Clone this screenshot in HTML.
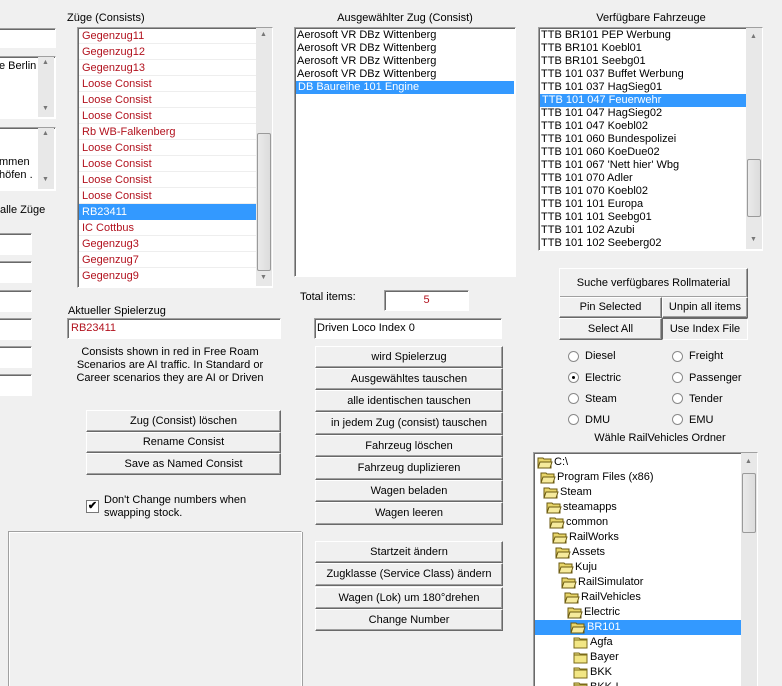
<!DOCTYPE html>
<html><head><meta charset="utf-8"><style>
*{box-sizing:border-box;margin:0;padding:0}
html,body{width:782px;height:686px;overflow:hidden}
body{background:#f0f0f0;font-family:"Liberation Sans",sans-serif;font-size:11px;color:#000;position:relative}
.a{position:absolute}
.in{position:absolute;background:#fff;border:1px solid;border-color:#a0a0a0 #fff #fff #a0a0a0;box-shadow:inset 1px 1px 0 #696969;overflow:hidden}
.b{position:absolute;background:#f0f0f0;border:1px solid;border-color:#fff #696969 #696969 #fff;box-shadow:inset -1px -1px 0 #a0a0a0;text-align:center;white-space:nowrap}
.it{position:absolute;left:2px;white-space:nowrap;height:13px;line-height:13px}
.sel{background:#3399ff;color:#fff}
.red{color:#b2121e}
.sb{position:absolute;background:#e8e8e8;width:16px}
.th{position:absolute;left:1px;width:14px;background:linear-gradient(90deg,#eaeaea,#dcdcdc);border:1px solid #9a9a9a;border-radius:2px}
.ar{position:absolute;left:4px;font-size:7px;color:#777}
.rad{position:absolute;width:11px;height:11px;border-radius:50%;border:1px solid #8a8a8a;background:#fff}
.rad.on::after{content:"";position:absolute;left:3px;top:3px;width:3px;height:3px;border-radius:50%;background:#000}
.tr{height:15px;line-height:15px;white-space:nowrap;overflow:hidden;display:flex;align-items:center}
.tr svg{flex:none;margin-right:1px}
.li{padding-left:3px;height:16px;line-height:17px;border-bottom:1px solid #eee}
</style></head><body>

<div class="in" style="left:-2px;top:28px;width:58px;height:20px"></div>
<div class="in" style="left:-2px;top:56px;width:58px;height:63px"><div class="a" style="left:0;top:3px">e Berlin -</div><div class="sb" style="left:39px;top:0;height:60px"><span class="ar" style="top:2px">▲</span><span class="ar" style="top:48px">▼</span></div></div>
<div class="in" style="left:-2px;top:127px;width:58px;height:64px"><div class="a" style="left:0;top:28px;line-height:13px">mmen<br>höfen .</div><div class="sb" style="left:39px;top:0;height:61px"><span class="ar" style="top:2px">▲</span><span class="ar" style="top:48px">▼</span></div></div>
<div class="a" style="left:0;top:204px">alle Züge</div>
<div class="in" style="left:-2px;top:233px;width:34px;height:22px"></div>
<div class="in" style="left:-2px;top:261px;width:34px;height:22px"></div>
<div class="in" style="left:-2px;top:290px;width:34px;height:22px"></div>
<div class="in" style="left:-2px;top:318px;width:34px;height:22px"></div>
<div class="in" style="left:-2px;top:346px;width:34px;height:22px"></div>
<div class="in" style="left:-2px;top:374px;width:34px;height:22px"></div>

<div class="a" style="left:67px;top:12px">Züge (Consists)</div>
<div class="in" style="left:77px;top:27px;width:196px;height:261px">
<div class="a" style="left:1px;top:0;width:177px">
<div class="red li">Gegenzug11</div>
<div class="red li">Gegenzug12</div>
<div class="red li">Gegenzug13</div>
<div class="red li">Loose Consist</div>
<div class="red li">Loose Consist</div>
<div class="red li">Loose Consist</div>
<div class="red li">Rb WB-Falkenberg</div>
<div class="red li">Loose Consist</div>
<div class="red li">Loose Consist</div>
<div class="red li">Loose Consist</div>
<div class="red li">Loose Consist</div>
<div class="sel li" style="border-bottom:0">RB23411</div>
<div class="red li">IC Cottbus</div>
<div class="red li">Gegenzug3</div>
<div class="red li">Gegenzug7</div>
<div class="red li" style="border-bottom:0">Gegenzug9</div>
</div>
<div class="sb" style="left:178px;top:0;height:258px"><span class="ar" style="top:3px">▲</span><div class="th" style="top:105px;height:138px"></div><span class="ar" style="top:246px">▼</span></div>
</div>

<div class="a" style="left:68px;top:305px">Aktueller Spielerzug</div>
<div class="in" style="left:67px;top:318px;width:214px;height:21px"><div class="a red" style="left:3px;top:3px">RB23411</div></div>
<div class="a" style="left:72px;top:346px;width:196px;text-align:center;line-height:13px">Consists shown in red in Free Roam Scenarios are AI traffic. In Standard or Career scenarios they are AI or Driven</div>

<div class="b" style="left:86px;top:410px;width:195px;height:22px;line-height:20px">Zug (Consist) löschen</div>
<div class="b" style="left:86px;top:432px;width:195px;height:21px;line-height:19px">Rename Consist</div>
<div class="b" style="left:86px;top:453px;width:195px;height:22px;line-height:20px">Save as Named Consist</div>

<div class="a" style="left:86px;top:500px;width:13px;height:13px;background:#fff;border:1px solid #777;font-size:11px;line-height:11px;text-align:center;font-weight:bold">✔</div>
<div class="a" style="left:104px;top:494px;line-height:13px">Don't Change numbers when<br>swapping stock.</div>

<div class="a" style="left:8px;top:531px;width:294px;height:170px;border:1px solid;border-color:#a0a0a0 #fff #fff #a0a0a0;box-shadow:inset 1px 1px 0 #fff,1px 1px 0 #a0a0a0"></div>

<div class="a" style="left:294px;top:12px;width:222px;text-align:center">Ausgewählter Zug (Consist)</div>
<div class="in" style="left:294px;top:27px;width:222px;height:250px">
<div class="it" style="top:1px">Aerosoft VR DBz Wittenberg</div>
<div class="it" style="top:14px">Aerosoft VR DBz Wittenberg</div>
<div class="it" style="top:27px">Aerosoft VR DBz Wittenberg</div>
<div class="it" style="top:40px">Aerosoft VR DBz Wittenberg</div>
<div class="it sel" style="top:53px;left:1px;width:218px;padding-left:2px">DB Baureihe 101 Engine</div>
</div>
<div class="a" style="left:300px;top:291px">Total items:</div>
<div class="in" style="left:384px;top:290px;width:85px;height:21px;text-align:center;line-height:18px;color:#b2121e">5</div>
<div class="in" style="left:314px;top:318px;width:188px;height:21px"><div class="a" style="left:2px;top:3px">Driven Loco Index 0</div></div>
<div class="b" style="left:315px;top:346px;width:188px;height:22px;line-height:20px">wird Spielerzug</div>
<div class="b" style="left:315px;top:368px;width:188px;height:22px;line-height:20px">Ausgewähltes tauschen</div>
<div class="b" style="left:315px;top:390px;width:188px;height:22px;line-height:20px">alle identischen tauschen</div>
<div class="b" style="left:315px;top:412px;width:188px;height:23px;line-height:21px">in jedem Zug (consist) tauschen</div>
<div class="b" style="left:315px;top:435px;width:188px;height:22px;line-height:20px">Fahrzeug löschen</div>
<div class="b" style="left:315px;top:457px;width:188px;height:23px;line-height:21px">Fahrzeug duplizieren</div>
<div class="b" style="left:315px;top:480px;width:188px;height:22px;line-height:20px">Wagen beladen</div>
<div class="b" style="left:315px;top:502px;width:188px;height:23px;line-height:21px">Wagen leeren</div>
<div class="b" style="left:315px;top:541px;width:188px;height:22px;line-height:20px">Startzeit ändern</div>
<div class="b" style="left:315px;top:563px;width:188px;height:23px;line-height:21px">Zugklasse (Service Class) ändern</div>
<div class="b" style="left:315px;top:587px;width:188px;height:22px;line-height:20px">Wagen (Lok) um 180°drehen</div>
<div class="b" style="left:315px;top:609px;width:188px;height:22px;line-height:20px">Change Number</div>

<div class="a" style="left:538px;top:12px;width:226px;text-align:center">Verfügbare Fahrzeuge</div>
<div class="in" style="left:538px;top:27px;width:225px;height:224px">
<div class="it" style="top:1px">TTB BR101 PEP Werbung</div>
<div class="it" style="top:14px">TTB BR101 Koebl01</div>
<div class="it" style="top:27px">TTB BR101 Seebg01</div>
<div class="it" style="top:40px">TTB 101 037 Buffet Werbung</div>
<div class="it" style="top:53px">TTB 101 037 HagSieg01</div>
<div class="it sel" style="top:66px;left:1px;width:206px;padding-left:2px">TTB 101 047 Feuerwehr</div>
<div class="it" style="top:79px">TTB 101 047 HagSieg02</div>
<div class="it" style="top:92px">TTB 101 047 Koebl02</div>
<div class="it" style="top:105px">TTB 101 060 Bundespolizei</div>
<div class="it" style="top:118px">TTB 101 060 KoeDue02</div>
<div class="it" style="top:131px">TTB 101 067 'Nett hier' Wbg</div>
<div class="it" style="top:144px">TTB 101 070 Adler</div>
<div class="it" style="top:157px">TTB 101 070 Koebl02</div>
<div class="it" style="top:170px">TTB 101 101 Europa</div>
<div class="it" style="top:183px">TTB 101 101 Seebg01</div>
<div class="it" style="top:196px">TTB 101 102 Azubi</div>
<div class="it" style="top:209px">TTB 101 102 Seeberg02</div>
<div class="sb" style="left:207px;top:0;height:221px"><span class="ar" style="top:5px">▲</span><div class="th" style="top:131px;height:58px"></div><span class="ar" style="top:208px">▼</span></div>
</div>

<div class="b" style="left:559px;top:268px;width:189px;height:30px;line-height:28px">Suche verfügbares Rollmaterial</div>
<div class="b" style="left:559px;top:297px;width:103px;height:21px;line-height:19px">Pin Selected</div>
<div class="b" style="left:662px;top:297px;width:86px;height:21px;line-height:19px">Unpin all items</div>
<div class="b" style="left:559px;top:318px;width:103px;height:22px;line-height:20px">Select All</div>
<div class="b" style="left:662px;top:318px;width:86px;height:22px;line-height:20px;border-color:#696969 #fff #fff #696969;box-shadow:none">Use Index File</div>

<div class="rad" style="left:568px;top:351px"></div><div class="a" style="left:585px;top:350px">Diesel</div>
<div class="rad on" style="left:568px;top:372px"></div><div class="a" style="left:585px;top:372px">Electric</div>
<div class="rad" style="left:568px;top:393px"></div><div class="a" style="left:585px;top:393px">Steam</div>
<div class="rad" style="left:568px;top:414px"></div><div class="a" style="left:585px;top:414px">DMU</div>
<div class="rad" style="left:672px;top:351px"></div><div class="a" style="left:689px;top:350px">Freight</div>
<div class="rad" style="left:672px;top:372px"></div><div class="a" style="left:689px;top:372px">Passenger</div>
<div class="rad" style="left:672px;top:393px"></div><div class="a" style="left:689px;top:393px">Tender</div>
<div class="rad" style="left:672px;top:414px"></div><div class="a" style="left:689px;top:414px">EMU</div>
<div class="a" style="left:560px;top:432px;width:200px;text-align:center">Wähle RailVehicles Ordner</div>

<svg width="0" height="0" style="position:absolute"><defs>
<symbol id="f" viewBox="0 0 16 13"><path d="M1 2h5l1 1h7v9H1z" fill="#e8d56a" stroke="#6b5a10"/><path d="M3 6h12l-2 6H1z" fill="#f6ea9c" stroke="#6b5a10"/></symbol>
<symbol id="c" viewBox="0 0 16 13"><path d="M1 2h5l1 1h7v9H1z" fill="#f2e685" stroke="#7a6a18"/><path d="M1 4h13" stroke="#7a6a18"/></symbol>
</defs></svg>
<div class="in" style="left:533px;top:452px;width:225px;height:240px">
<div class="a" style="left:1px;top:2px;width:222px">
<div class="tr" style="padding-left:2px"><svg width="16" height="13"><use href="#f"/></svg>C:\</div>
<div class="tr" style="padding-left:5px"><svg width="16" height="13"><use href="#f"/></svg>Program Files (x86)</div>
<div class="tr" style="padding-left:8px"><svg width="16" height="13"><use href="#f"/></svg>Steam</div>
<div class="tr" style="padding-left:11px"><svg width="16" height="13"><use href="#f"/></svg>steamapps</div>
<div class="tr" style="padding-left:14px"><svg width="16" height="13"><use href="#f"/></svg>common</div>
<div class="tr" style="padding-left:17px"><svg width="16" height="13"><use href="#f"/></svg>RailWorks</div>
<div class="tr" style="padding-left:20px"><svg width="16" height="13"><use href="#f"/></svg>Assets</div>
<div class="tr" style="padding-left:23px"><svg width="16" height="13"><use href="#f"/></svg>Kuju</div>
<div class="tr" style="padding-left:26px"><svg width="16" height="13"><use href="#f"/></svg>RailSimulator</div>
<div class="tr" style="padding-left:29px"><svg width="16" height="13"><use href="#f"/></svg>RailVehicles</div>
<div class="tr" style="padding-left:32px"><svg width="16" height="13"><use href="#f"/></svg>Electric</div>
<div class="tr sel" style="padding-left:35px;width:207px"><svg width="16" height="13"><use href="#f"/></svg>BR101</div>
<div class="tr" style="padding-left:38px"><svg width="16" height="13"><use href="#c"/></svg>Agfa</div>
<div class="tr" style="padding-left:38px"><svg width="16" height="13"><use href="#c"/></svg>Bayer</div>
<div class="tr" style="padding-left:38px"><svg width="16" height="13"><use href="#c"/></svg>BKK</div>
<div class="tr" style="padding-left:38px"><svg width="16" height="13"><use href="#c"/></svg>BKK-L</div>
</div>
<div class="sb" style="left:207px;top:0;height:240px"><span class="ar" style="top:5px">▲</span><div class="th" style="top:20px;height:60px"></div></div>
</div>
</body></html>
